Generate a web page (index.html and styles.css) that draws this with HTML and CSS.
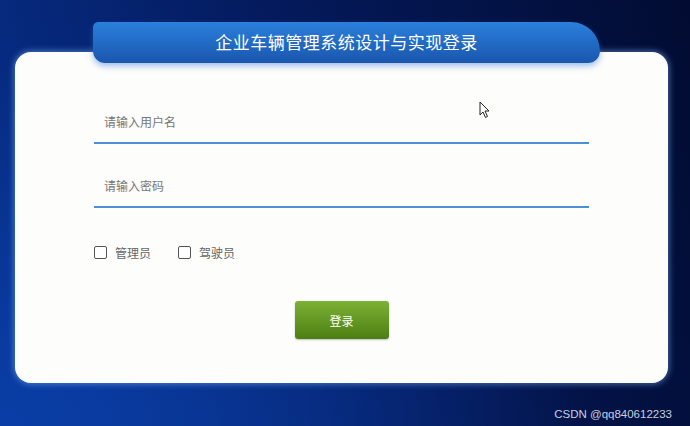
FILE: index.html
```
<!DOCTYPE html>
<html lang="zh-CN">
<head>
  <meta charset="UTF-8">
  <title>企业车辆管理系统设计与实现登录</title>
  <link rel="stylesheet" href="styles.css">
</head>
<body>
  <div class="page">
    <div class="title-tab">企业车辆管理系统设计与实现登录</div>
    <div class="card">
      <form class="login-form">
        <input class="field" type="text" placeholder="请输入用户名">
        <input class="field" type="password" placeholder="请输入密码">
        <div class="roles">
          <label class="role"><span class="box"></span>管理员</label>
          <label class="role"><span class="box"></span>驾驶员</label>
        </div>
        <button class="btn-login" type="button">登录</button>
      </form>
    </div>
  </div>

  <svg class="cursor" width="12" height="18" viewBox="0 0 12 18">
    <path d="M1 1 L1 14 L4 11 L6.5 16.5 L8.5 15.5 L6 10 L10 10 Z" fill="#fff" stroke="#222" stroke-width="1"/>
  </svg>

  <div class="watermark">CSDN @qq840612233</div>
</body>
</html>
```
FILE: styles.css
```
:root {
  --tab-blue: #2277d6;
  --tab-blue-dark: #1a56ad;
  --line-blue: #4a90d2;
  --card-bg: #fdfdfb;
  --text-gray: #666;
}

html, body {
  height: 100%;
}

body {
  margin: 0;
  font-family: "Noto Sans CJK SC", "Noto Sans", sans-serif;
  background:
    radial-gradient(ellipse at 0% 100%, #0a3ea6 0%, rgba(10,62,166,0) 60%),
    linear-gradient(75deg, #07308c 0%, #04195a 50%, #020c32 100%);
  overflow: hidden;
}

.page {
  padding: 22px 22px 0 15px;
}

.title-tab {
  position: relative;
  z-index: 1;
  width: 507px;
  height: 41px;
  margin: 0 0 -11px 78px;
  border-radius: 6px 34px 14px 14px;
  background: linear-gradient(to bottom, #2a80dc, var(--tab-blue-dark));
  box-shadow: 0 3px 6px rgba(40,110,220,0.45);
  color: #fff;
  font-size: 17px;
  line-height: 40px;
  text-align: center;
  letter-spacing: 0.5px;
}

.card {
  height: 331px;
  background: var(--card-bg);
  border-radius: 16px;
  box-shadow: 0 0 6px 1px rgba(130,185,255,0.55);
}

.login-form {
  display: flex;
  flex-direction: column;
  padding: 54px 0 0 79px;
  width: 495px;
}

.field {
  height: 38px;
  box-sizing: border-box;
  margin: 0 0 26px;
  padding: 0 0 5px 10px;
  border: none;
  border-bottom: 2px solid var(--line-blue);
  background: transparent;
  font-family: inherit;
  font-size: 12px;
  outline: none;
}

.field::placeholder {
  color: #777;
}

.roles {
  display: flex;
  gap: 27px;
  margin-top: 11px;
}

.role {
  display: flex;
  align-items: center;
  gap: 8px;
  font-size: 12px;
  color: var(--text-gray);
  height: 14px;
}

.box {
  width: 11px;
  height: 11px;
  border: 1px solid #555;
  border-radius: 2px;
  background: #fff;
}

.btn-login {
  align-self: center;
  width: 94px;
  height: 38px;
  margin-top: 42px;
  border: none;
  border-radius: 3px;
  background: linear-gradient(to bottom, #7cb136, #4c7f12);
  box-shadow: 0 1px 2px rgba(0,0,0,0.25);
  color: #fff;
  font-family: inherit;
  font-size: 12px;
}

.cursor {
  position: absolute;
  left: 479px;
  top: 101px;
}

.watermark {
  position: absolute;
  right: 18px;
  bottom: 6px;
  font-family: "Liberation Sans", sans-serif;
  font-size: 11.5px;
  color: #c6cfe0;
}
```
